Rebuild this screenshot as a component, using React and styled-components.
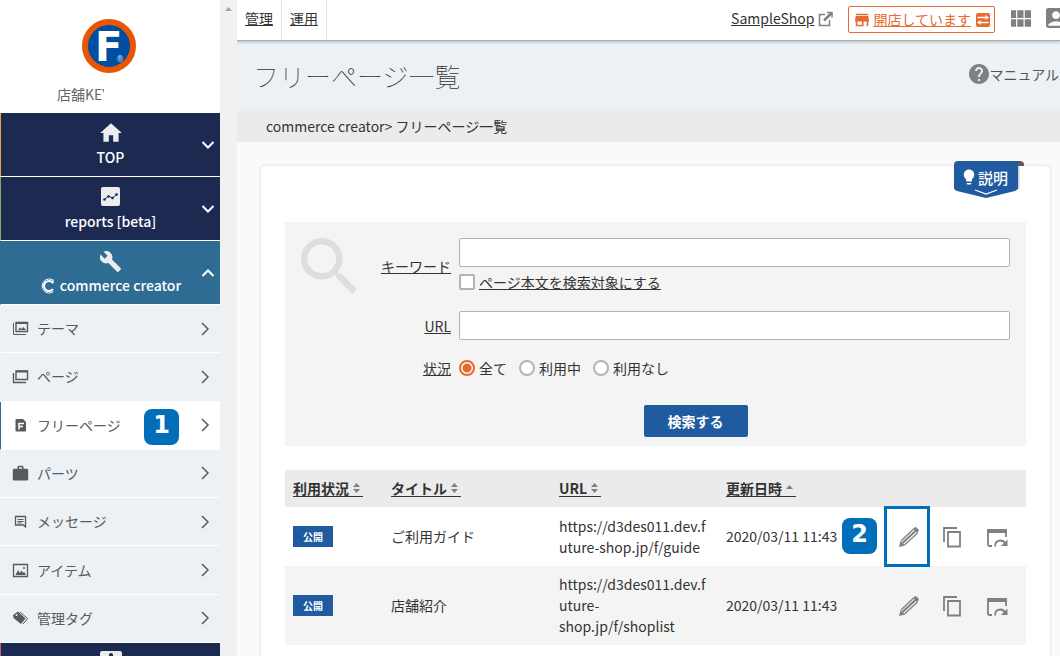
import React from 'react';
import styled, { createGlobalStyle, css, ThemeProvider } from 'styled-components';
import {
  MdHome,
  MdBuild,
  MdHelp,
  MdSearch,
  MdViewModule,
  MdAccountBox,
  MdStore,
  MdWork,
  MdLightbulb
} from 'react-icons/md';

const theme = {
  navy: '#1c2a52',
  teal: '#2e6c93',
  blue: '#205b9f',
  marker: '#006eb9',
  orange: '#e86a30',
  pale: '#ecf1f5',
  text: '#333',
  icon: '#808080'
};

const GlobalStyle = createGlobalStyle`
  * {
    box-sizing: border-box;
  }

  body {
    margin: 0;
    overflow: hidden;
    color: #333;
    font: 14px/21px 'Noto Sans CJK JP', sans-serif;
  }

  button, input {
    font: inherit;
    color: inherit;
  }

  svg {
    display: block;
    flex-shrink: 0;
  }
`;

const Page = styled.div`
  display: grid;
  grid-template-columns: 220px 17px minmax(0, 1fr);
  height: 100vh;
  overflow: hidden;
`;

/*  SIDEBAR */
const Sidebar = styled.nav`
  height: 100vh;
  overflow: hidden;
  background: #fff;
`;

const ShopHead = styled.div`
  display: flex;
  flex-direction: column;
  align-items: center;
  gap: 10px;
  height: 113px;
  padding: 18px 2px 0 0;
`;

const ShopKey = styled.div`
  width: 47px;
  margin-right: 57px;
  overflow: hidden;
  white-space: nowrap;
  color: #666;
`;

const NavButton = styled.button`
  display: grid;
  grid-template-columns: 19px 1fr 19px;
  align-items: center;
  width: 100%;
  height: 64px;
  padding: 0;
  border: 0;
  border-left: 1px solid ${p => p.$edge};
  border-bottom: 1px solid #fff;
  background: ${p => (p.$active ? p.theme.teal : p.theme.navy)};
  color: #fff;
  font-weight: 500;
`;

const NavLabel = styled.span`
  grid-column: 2;
  display: flex;
  flex-direction: column;
  align-items: center;
  gap: 2px;
`;

const NavIcon = styled.span`
  display: flex;
  align-items: center;
  height: 24px;
  color: #ececec;
`;

const NavText = styled.span`
  display: flex;
  align-items: center;
  gap: 4px;
  min-height: 21px;
`;

const SubList = styled.ul`
  display: grid;
  grid-auto-rows: 1fr;
  min-height: 338px;
  margin: 0;
  padding: 0;
  list-style: none;
`;

const SubLink = styled.a`
  position: relative;
  display: flex;
  align-items: center;
  gap: 8px;
  height: 100%;
  padding: 0 8px 0 11px;
  border-left: 1px solid ${p => (p.$active ? p.theme.teal : p.theme.pale)};
  border-bottom: 1px solid #fff;
  background: ${p => (p.$active ? '#fff' : p.theme.pale)};
  color: #5a5a5a;
  text-decoration: none;

  > svg:last-child {
    margin-left: auto;
  }
`;

const ScrollTrack = styled.div`
  padding: 7px 0 0 5px;
  background: #f1f1f1;
`;

/*  MAIN */
const Main = styled.main`
  overflow: hidden;
  background: #fafafa;
`;

const TopBar = styled.header`
  position: relative;
  display: flex;
  height: 41px;
  border-bottom: 1px solid #aeb0b3;
  background: #fff;
  box-shadow: 0 1px 3px rgba(0, 0, 0, 0.25);
`;

const TopLink = styled.a`
  padding: 8px 8px 0;
  border-right: 1px solid #e4e4e4;
  color: #333;
`;

const TopTools = styled.div`
  display: flex;
  align-items: flex-start;
  margin: 6px -6px 0 auto;
  color: ${p => p.theme.icon};
`;

const ShopLink = styled.a`
  display: flex;
  align-items: center;
  gap: 4px;
  margin: 2px 15px 0 0;
  color: #333;
  text-decoration: none;

  span {
    text-decoration: underline;
  }
`;

const OpenButton = styled.button`
  display: flex;
  align-items: center;
  gap: 4px;
  height: 27px;
  margin-right: 16px;
  padding: 0 4px 0 6px;
  border: 1px solid ${p => p.theme.orange};
  border-radius: 2px;
  background: #fff;
  color: ${p => p.theme.orange};
  text-decoration: underline;
`;

const ToolButton = styled.button`
  width: 20px;
  height: 24px;
  margin-right: 15px;
  padding: 0;
  border: 0;
  background: none;
  color: ${p => p.theme.icon};

  &:last-child {
    margin-right: 0;
  }
`;

const TitleBar = styled.div`
  display: flex;
  align-items: center;
  justify-content: space-between;
  height: 70px;
  padding: 0 1px 0 16px;
  background: ${p => p.theme.pale};
`;

const Title = styled.h1`
  margin: 0;
  font-size: 26px;
  font-weight: 100;
  line-height: 40px;
`;

const Manual = styled.a`
  display: flex;
  align-items: center;
  padding-bottom: 4px;
  color: #555;
  text-decoration: none;

  svg {
    color: ${p => p.theme.icon};
  }
`;

const Breadcrumb = styled.div`
  padding: 5px 29px;
  background: #ebebeb;
`;

const Card = styled.section`
  position: relative;
  min-height: 520px;
  margin: 23px 9px 0 23px;
  padding: 56px 24px 24px;
  border: 1px solid #ebebeb;
  border-radius: 4px;
  background: #fff;
  box-shadow: 0 0 2px rgba(0, 0, 0, 0.08);
`;

const HelpRibbon = styled.button`
  position: absolute;
  top: -5px;
  right: 26px;
  width: 70px;
  height: 38px;
  padding: 0;
  border: 0;
  background: none;
  color: #fff;
  font-size: 15px;
  font-weight: 500;

  > svg {
    position: absolute;
    top: 0;
    left: 0;
  }
`;

const RibbonText = styled.span`
  position: relative;
  display: flex;
  align-items: center;
  height: 38px;
  padding: 0 0 6px 6px;
`;

const SearchForm = styled.form`
  display: flex;
  padding: 16px 0 9px 16px;
  background: #f4f4f4;

  > svg {
    color: #dedede;
  }
`;

const Fields = styled.div`
  display: grid;
  flex: 1;
  gap: 18px;
`;

const Field = styled.div`
  display: grid;
  grid-template-columns: 86px 1fr;
  gap: 8px;
  align-items: center;
  padding-right: 16px;
  line-height: 20px;
`;

const FieldLabel = styled.label`
  text-align: right;
  text-decoration: underline;
`;

const TextInput = styled.input`
  display: block;
  width: 100%;
  height: 29px;
  padding: 0 8px;
  border: 1px solid #b3b3b3;
  border-radius: 2px;
  background: #fff;
`;

const Choice = styled.label`
  display: flex;
  align-items: center;
  gap: 4px;
  ${p => p.$underline && 'text-decoration: underline;'}
`;

const Choices = styled.div`
  display: flex;
  gap: 12px;
`;

const KeywordCell = styled.div`
  display: grid;
  gap: 5px;
  padding-bottom: 1px;
`;

const boxInput = css`
  appearance: none;
  width: 16px;
  height: 16px;
  margin: 0;
  border: 2px solid #b3b3b3;
  background: #fff;
`;

const Checkbox = styled.input.attrs({ type: 'checkbox' })`
  ${boxInput}
  border-radius: 2px;
`;

const Radio = styled.input.attrs({ type: 'radio' })`
  ${boxInput}
  border-radius: 50%;

  &:checked {
    border-color: ${p => p.theme.orange};
    background: radial-gradient(circle, ${p => p.theme.orange} 4px, #fff 5px);
  }
`;

const SubmitButton = styled.button`
  justify-self: center;
  height: 32px;
  margin-top: 9px;
  padding: 0 24px;
  border: 0;
  border-radius: 2px;
  background: ${p => p.theme.blue};
  color: #fff;
  font-weight: 700;
`;

const Table = styled.table`
  width: 100%;
  margin-top: 24px;
  border-collapse: collapse;
  table-layout: fixed;

  th, td {
    padding: 8px;
    text-align: left;
  }

  thead {
    background: #ebebeb;
  }

  thead tr {
    height: 37px;
  }

  tbody tr {
    height: 59px;
  }

  tbody tr:nth-child(even) {
    background: #f4f4f4;
  }
`;

const Col = styled.col`
  width: ${p => p.$width}px;
`;

const SortButton = styled.button`
  display: flex;
  align-items: center;
  height: 16px;
  padding: 0;
  border: 0;
  border-bottom: 1px solid #333;
  background: none;
  font-weight: 700;
  line-height: 15px;
`;

const UrlCell = styled.td`
  overflow-wrap: break-word;
`;

const IconCell = styled.td`
  && {
    padding: 0 0 0 10px;
  }
`;

const Status = styled.span`
  display: block;
  width: 40px;
  background: ${p => p.theme.blue};
  color: #fff;
  font-size: 10px;
  font-weight: 700;
  text-align: center;
`;

const ActionButton = styled.button`
  display: block;
  width: 24px;
  height: 24px;
  padding: 0;
  border: 0;
  background: none;
  color: ${p => p.theme.icon};
`;

/*  ANNOTATIONS */
const Anchor = styled.div`
  position: relative;
`;

const Marker = styled.span`
  position: absolute;
  top: ${p => p.$top}px;
  left: ${p => p.$left}px;
  width: 35px;
  height: 36px;
  border-radius: 8px;
  background: ${p => p.theme.marker};
  color: #fff;
  font: 700 24px/32px 'DejaVu Sans', sans-serif;
  text-align: center;
`;

const Highlight = styled.span`
  position: absolute;
  top: -19px;
  left: -13px;
  width: 46px;
  height: 61px;
  border: 3px solid ${p => p.theme.marker};
  pointer-events: none;
`;

/*  ICONS */
const Logo = () => (
  <svg width="56" height="56" viewBox="0 0 56 56">
    <circle cx="28" cy="28" r="24" fill="#004ea2" stroke="#ea5504" strokeWidth="6" />
    <text x="14" y="43" fill="#fff" fontFamily="DejaVu Sans" fontWeight="700" fontSize="40">
      F
      <tspan x="35" y="44" fill="#cfe0f0" fontWeight="400" fontSize="8">®</tspan>
    </text>
  </svg>
);

const Chevron = ({ d, stroke = 2 }) => (
  <svg width="14" height="14" viewBox="0 0 14 14" fill="none" stroke="currentColor" strokeWidth={stroke}>
    <path d={d} />
  </svg>
);

const ReportIcon = () => (
  <svg width="20" height="20" viewBox="0 0 20 20">
    <rect width="19" height="19" rx="2" fill="currentColor" />
    <path d="M3.500 12.500l4-3.500 4 2 5-4" fill="none" stroke="#1c2a52" strokeWidth="1" />
    <g fill="#1c2a52">
      <circle cx="3.500" cy="12.500" r="1.300" />
      <circle cx="7.500" cy="9.500" r="1.300" />
      <circle cx="11.500" cy="11" r="1.300" />
      <circle cx="15.500" cy="7.500" r="1.300" />
    </g>
  </svg>
);

const CreatorMark = () => (
  <svg width="16" height="16" viewBox="0 0 16 16" fill="none" stroke="#fff">
    <path d="M13.500 2.500A7 7 0 1 0 13.500 13.500" strokeWidth="1" />
    <path d="M13 5A5 5 0 1 0 13 11" strokeWidth="2" />
    <path d="M13 1.500v4" strokeWidth="1" />
  </svg>
);

const ClipboardIcon = () => (
  <svg width="24" height="24" viewBox="0 0 24 24">
    <path fill="currentColor" fillRule="evenodd" d="M3 0h18a2 2 0 0 1 2 2v20a2 2 0 0 1-2 2H3a2 2 0 0 1-2-2V2a2 2 0 0 1 2-2zm7 4v6h4V4a2 2 0 0 0-4 0z" />
  </svg>
);

const SubIcon = ({ children }) => (
  <svg width="17" height="17" viewBox="0 0 17 17" fill="none" stroke="currentColor" strokeWidth="1">
    {children}
  </svg>
);

const ThemeIcon = () => (
  <SubIcon>
    <path d="M1.500 3v11.500H14" />
    <path d="M4 2.500h11.500v9H4z" strokeWidth="1.400" />
    <path d="M4 3h12" strokeWidth="2" />
    <path d="M6 10l2-2.500 1.500 1.500L11.500 7 14 10z" fill="currentColor" stroke="none" />
  </SubIcon>
);

const PageIcon = () => (
  <SubIcon>
    <path d="M1.500 5v9.500H14" strokeWidth="1.400" />
    <path d="M4 3h11.500v8.500H4z" strokeWidth="1.400" />
    <path d="M4 3.500h12" strokeWidth="2" />
  </SubIcon>
);

const FreePageIcon = () => (
  <SubIcon>
    <path d="M4.500 2h6.500l3 3v8.500a1 1 0 0 1-1 1H4.500a1 1 0 0 1-1-1V3a1 1 0 0 1 1-1z" fill="currentColor" stroke="none" />
    <path d="M7 12.500V6.500H12M7 9.500h4" stroke="#fff" strokeWidth="1.500" />
  </SubIcon>
);

const MessageIcon = () => (
  <SubIcon>
    <path d="M3.500 3.500h10v10.500l-2-2h-8z" strokeWidth="1.300" />
    <path d="M5.500 6.500h6M5.500 8.500h6M5.500 10h4" />
  </SubIcon>
);

const ItemIcon = () => (
  <SubIcon>
    <path d="M1.500 2.500h14v12h-14z" strokeWidth="1.300" />
    <path d="M3.500 13l2.500-5 2 3 1.500-2.500L11 11l1-1.500 2 3.500z" fill="currentColor" stroke="none" />
    <circle cx="12" cy="6" r="1" fill="currentColor" stroke="none" />
  </SubIcon>
);

const TagIcon = () => (
  <SubIcon>
    <path fillRule="evenodd" d="M1 5l5-3.500 7.500 7L9 14 1.500 8zM4.500 4a1 1 0 1 0 0 2 1 1 0 0 0 0-2z" fill="currentColor" stroke="none" />
    <path d="M8 2l7.500 6.500L11 14" />
  </SubIcon>
);

const ExternalIcon = () => (
  <svg width="15" height="16" viewBox="0 0 15 16" fill="none" stroke="#808080" strokeWidth="1.500">
    <path d="M7 3.500H1.500v11h10V9M9 1.500h5v5" />
    <path d="M13.500 2L6 9.500" strokeWidth="2.500" />
  </svg>
);

const SwapIcon = () => (
  <svg width="15" height="14" viewBox="0 0 15 14">
    <rect x="1" width="14" height="14" rx="2" fill="currentColor" />
    <path d="M2.500 4.500h9M13.500 9.500h-9" stroke="#fff" strokeWidth="1.300" />
    <path d="M10.500 2L14 4.500 10.500 7zM5.500 7L2 9.500 5.500 12z" fill="#fff" />
  </svg>
);

const RibbonShape = () => (
  <svg width="70" height="38" viewBox="0 0 70 38">
    <path d="M62 0h4a4 4 0 0 1 4 4v1h-8z" fill="#5a5a5a" />
    <path d="M64.500 5v23" stroke="#d0d0d0" strokeWidth="2" />
    <path d="M4 0h60v27q0 2-3 3L32 37 3 30q-3-1-3-3V4a4 4 0 0 1 4-4z" fill="#205b9f" />
    <path d="M21 29l11 4 11-4" fill="none" stroke="#fff" strokeWidth="1.300" />
  </svg>
);

const SortIcon = ({ up }) => (
  <svg width="14" height="12" viewBox="0 0 14 12" fill="#808080">
    <path d={up ? 'M4 7l3.500-4L11 7z' : 'M4 5l3.500-4L11 5z'} />
    {!up && <path d="M4 7h7l-3.500 4z" />}
  </svg>
);

const PencilIcon = () => (
  <svg width="24" height="24" viewBox="0 0 24 24" fill="none" stroke="currentColor">
    <path d="M4 16L16.500 4M7.500 20L20.500 8" strokeWidth="1.300" />
    <path d="M5.500 18L18.500 6" strokeWidth="2.200" />
    <path d="M16 4l1.500-1.500q1-.8 2 0l2 2q.8 1 0 2L20 8zM2 22l1.500-6L8 20.500z" fill="currentColor" stroke="none" />
  </svg>
);

const CopyIcon = () => (
  <svg width="24" height="24" viewBox="0 0 24 24" fill="none" stroke="currentColor" strokeWidth="2">
    <path d="M3 17V3h13" strokeWidth="1.800" />
    <path d="M7 7h12v14.500H7z" strokeWidth="1.800" />
  </svg>
);

const PreviewIcon = () => (
  <svg width="24" height="24" viewBox="0 0 24 24" fill="none" stroke="currentColor" strokeWidth="1.800">
    <path d="M7 21H4.500Q3 21 3 19.500V5h18v7" />
    <path d="M4 4h16q2 0 2 2v2H2V6q0-2 2-2z" fill="currentColor" stroke="none" />
    <path d="M10 21.500q0-6 5.500-6 3 0 4.500 3" />
    <path d="M22.500 14.500v6.500H16z" fill="currentColor" stroke="none" />
  </svg>
);

const DOWN = 'M1.500 4l5.500 5.500L12.500 4';
const UP = 'M1.500 10L7 4.500l5.500 5.500';
const RIGHT = 'M4 1l6 6-6 6';

const subItems = [
  { label: 'テーマ', icon: <ThemeIcon /> },
  { label: 'ページ', icon: <PageIcon /> },
  { label: 'フリーページ', icon: <FreePageIcon />, active: true },
  { label: 'パーツ', icon: <MdWork size={17} viewBox="1 1 22 22" /> },
  { label: 'メッセージ', icon: <MessageIcon /> },
  { label: 'アイテム', icon: <ItemIcon /> },
  { label: '管理タグ', icon: <TagIcon /> }
];

const pages = [
  { title: 'ご利用ガイド', url: 'https://d3des011.dev.future-shop.jp/f/guide', date: '2020/03/11 11:43', marked: true },
  { title: '店舗紹介', url: 'https://d3des011.dev.future-shop.jp/f/shoplist', date: '2020/03/11 11:43' }
];

const columns = ['利用状況', 'タイトル', 'URL', '更新日時'];

const NavItem = ({ icon, label, edge, active, mark }) => (
  <NavButton type="button" $edge={edge} $active={active}>
    <NavLabel>
      <NavIcon>{icon}</NavIcon>
      <NavText>
        {mark}
        {label}
      </NavText>
    </NavLabel>
    <Chevron d={active ? UP : DOWN} />
  </NavButton>
);

const SideMenu = () => (
  <Sidebar>
    <ShopHead>
      <Logo />
      <ShopKey>店舗KEY</ShopKey>
    </ShopHead>
    <NavItem icon={<MdHome size={26} />} label="TOP" edge="#e8a83c" />
    <NavItem icon={<ReportIcon />} label="reports [beta]" edge="#7fae5c" />
    <NavItem icon={<MdBuild size={23} />} label="commerce creator" edge="#2e6c93" mark={<CreatorMark />} active />
    <SubList>
      {subItems.map(item => (
        <li key={item.label}>
          <SubLink href="#" $active={item.active}>
            {item.icon}
            {item.label}
            {item.active && <Marker $top={7} $left={143}>1</Marker>}
            <Chevron d={RIGHT} stroke={1.5} />
          </SubLink>
        </li>
      ))}
    </SubList>
    <NavItem icon={<ClipboardIcon />} label="" edge="#c06078" />
  </Sidebar>
);

const Search = () => (
  <SearchForm>
    <MdSearch size={64} viewBox="3 3 20 20" />
    <Fields>
      <Field>
        <FieldLabel htmlFor="keyword">キーワード</FieldLabel>
        <KeywordCell>
          <TextInput id="keyword" type="text" />
          <Choice $underline>
            <Checkbox />
            ページ本文を検索対象にする
          </Choice>
        </KeywordCell>
      </Field>
      <Field>
        <FieldLabel htmlFor="url">URL</FieldLabel>
        <TextInput id="url" type="text" />
      </Field>
      <Field>
        <FieldLabel as="span">状況</FieldLabel>
        <Choices>
          <Choice><Radio name="status" defaultChecked />全て</Choice>
          <Choice><Radio name="status" />利用中</Choice>
          <Choice><Radio name="status" />利用なし</Choice>
        </Choices>
      </Field>
      <SubmitButton type="button">検索する</SubmitButton>
    </Fields>
  </SearchForm>
);

const PageTable = () => (
  <Table>
    <colgroup>
      <Col $width={98} />
      <Col $width={168} />
      <Col $width={167} />
      <col />
      <Col $width={44} />
      <Col $width={44} />
      <Col $width={51} />
    </colgroup>
    <thead>
      <tr>
        {columns.map((name, i) => (
          <th key={name}>
            <SortButton type="button">
              {name}
              <SortIcon up={i === 3} />
            </SortButton>
          </th>
        ))}
        <th colSpan={3} />
      </tr>
    </thead>
    <tbody>
      {pages.map(page => (
        <tr key={page.url}>
          <td><Status>公開</Status></td>
          <td>{page.title}</td>
          <UrlCell>{page.url}</UrlCell>
          <td>
            <Anchor>
              {page.date}
              {page.marked && <Marker $top={-8} $left={116}>2</Marker>}
            </Anchor>
          </td>
          <IconCell>
            <Anchor>
              <ActionButton type="button" aria-label="編集"><PencilIcon /></ActionButton>
              {page.marked && <Highlight />}
            </Anchor>
          </IconCell>
          <IconCell>
            <ActionButton type="button" aria-label="コピー"><CopyIcon /></ActionButton>
          </IconCell>
          <IconCell>
            <ActionButton type="button" aria-label="プレビュー"><PreviewIcon /></ActionButton>
          </IconCell>
        </tr>
      ))}
    </tbody>
  </Table>
);

export default function App() {
  return (
    <ThemeProvider theme={theme}>
      <GlobalStyle />
      <Page>
        <SideMenu />
        <ScrollTrack>
          <svg width="7" height="4" viewBox="0 0 7 4">
            <path d="M0 4l3.500-4L7 4z" fill="#a3a3a3" />
          </svg>
        </ScrollTrack>
        <Main>
          <TopBar>
            <TopLink href="#">管理</TopLink>
            <TopLink href="#">運用</TopLink>
            <TopTools>
              <ShopLink href="#">
                <span>SampleShop</span>
                <ExternalIcon />
              </ShopLink>
              <OpenButton type="button">
                <MdStore size={14} viewBox="3 3 18 18" />
                開店しています
                <SwapIcon />
              </OpenButton>
              <ToolButton type="button" aria-label="アプリ">
                <MdViewModule size={20} viewBox="4 3 17 17" />
              </ToolButton>
              <ToolButton type="button" aria-label="アカウント">
                <MdAccountBox size={20} viewBox="3 3 18 18" />
              </ToolButton>
            </TopTools>
          </TopBar>
          <TitleBar>
            <Title>フリーページ一覧</Title>
            <Manual href="#">
              <MdHelp size={20} viewBox="2 2 20 20" />
              マニュアル
            </Manual>
          </TitleBar>
          <Breadcrumb>commerce creator&gt; フリーページ一覧</Breadcrumb>
          <Card>
            <HelpRibbon type="button">
              <RibbonShape />
              <RibbonText>
                <MdLightbulb size={18} />
                説明
              </RibbonText>
            </HelpRibbon>
            <Search />
            <PageTable />
          </Card>
        </Main>
      </Page>
    </ThemeProvider>
  );
}
